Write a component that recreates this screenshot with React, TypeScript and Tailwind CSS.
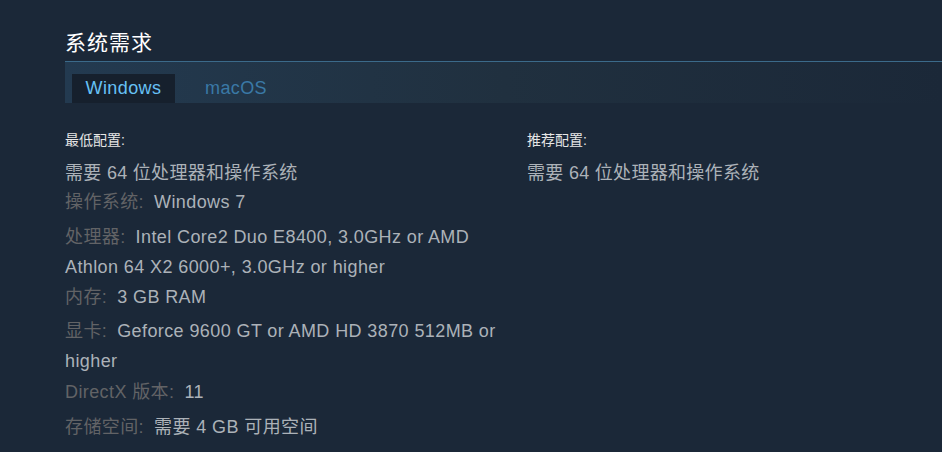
const font = { fontFamily: '"Liberation Sans", Arial, "Noto Sans CJK SC", sans-serif' };

type Row = { label?: string; value: string; gap: string };

const minRows: Row[] = [
  { label: '操作系统:', value: 'Windows 7', gap: 'mt-[1px]' },
  { label: '处理器:', value: 'Intel Core2 Duo E8400, 3.0GHz or AMD Athlon 64 X2 6000+, 3.0GHz or higher', gap: 'mt-[5px]' },
  { label: '内存:', value: '3 GB RAM', gap: 'mt-[0px]' },
  { label: '显卡:', value: 'Geforce 9600 GT or AMD HD 3870 512MB or higher', gap: 'mt-[4px]' },
  { label: 'DirectX 版本:', value: '11', gap: 'mt-[1px]' },
  { label: '存储空间:', value: '需要 4 GB 可用空间', gap: 'mt-[5px]' },
];

function Spec({ row }: { row: Row }) {
  return (
    <li className={`${row.gap} text-[18px] leading-[30px] tracking-[0.4px] text-[#acb2b8]`}>
      <span className="text-[#626366]">{row.label}</span>
      <span className="ml-[10px]">{row.value}</span>
    </li>
  );
}

export default function App() {
  return (
    <div className="min-h-[452px] w-full bg-[#1b2838]" style={font}>
      <div className="pl-[65px] pt-[29px]">
        <h2 className="text-[21px] leading-[28px] tracking-[1px] text-[#ffffff]">系统需求</h2>
        <div className="mt-[4px] border-t border-[#3b6a8a] bg-gradient-to-r from-[#233a50] via-[#20303f] to-[#1b2838]">
          <div className="flex pl-[7px] pt-[12px]">
            <div className="flex h-[29px] w-[103px] items-center justify-center bg-[#16202d] text-[18px] tracking-[0.4px] text-[#67c1f5]">
              Windows
            </div>
            <div className="flex h-[29px] items-center px-[30px] text-[18px] tracking-[0.4px] text-[#3a79a6]">macOS</div>
          </div>
        </div>
        <div className="mt-[28px] flex">
          <div className="w-[445px]">
            <div className="text-[14px] leading-[18px] text-[#e6e6e6]">最低配置:</div>
            <ul className="mt-[11px]">
              <li className="text-[18px] leading-[26px] tracking-[0.3px] text-[#acb2b8]">需要 64 位处理器和操作系统</li>
              {minRows.map((r) => (
                <Spec key={r.value} row={r} />
              ))}
            </ul>
          </div>
          <div className="ml-[17px] w-[400px]">
            <div className="text-[14px] leading-[18px] text-[#e6e6e6]">推荐配置:</div>
            <ul className="mt-[11px]">
              <li className="text-[18px] leading-[26px] tracking-[0.3px] text-[#acb2b8]">需要 64 位处理器和操作系统</li>
            </ul>
          </div>
        </div>
      </div>
    </div>
  );
}
